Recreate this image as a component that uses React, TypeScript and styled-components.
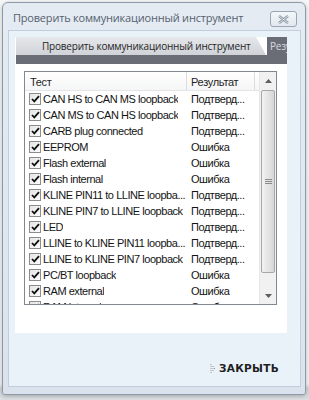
import React from "react";
import styled, { createGlobalStyle } from "styled-components";

const Global = createGlobalStyle`
  html, body { margin: 0; padding: 0; }
  body { width: 309px; height: 400px; overflow: hidden; background: #dfe2e5; }
`;

const Page = styled.div`
  width: 309px;
  height: 400px;
  box-sizing: border-box;
  padding: 2px 0 0 2px;
  background: linear-gradient(#f6f7f8 0%, #f2f3f4 96%, #d3d6da 97%, #dcdfe2 100%);
  display: flex;
  flex-direction: column;
  align-items: flex-start;
`;

const Window = styled.div`
  width: 304px;
  height: 393px;
  box-sizing: border-box;
  border: 1px solid #8e9aa8;
  border-radius: 6px 6px 3px 3px;
  background: linear-gradient(#e4ebf3, #dae3ed);
  display: flex;
  flex-direction: column;
  box-shadow: 0 1px 4px rgba(0, 0, 0, 0.25);
`;

const TitleBar = styled.div`
  height: 27px;
  display: flex;
  align-items: flex-start;
  justify-content: space-between;
  padding: 0 8px 0 10px;
`;

const Title = styled.div`
  font-family: "Open Sans", "Noto Sans", sans-serif;
  font-size: 11px;
  letter-spacing: -0.2px;
  line-height: 14px;
  margin-top: 8px;
  color: #56616e;
  white-space: nowrap;
`;

const CloseButton = styled.div`
  width: 27px;
  height: 16px;
  margin-top: 8px;
  box-sizing: border-box;
  border: 1px solid #9aa6b3;
  border-radius: 3px;
  background: linear-gradient(#f4f7fa, #e2e8ef);
  display: flex;
  align-items: center;
  justify-content: center;
`;

const Client = styled.div`
  flex: 1;
  margin: 0 4px 7px 5px;
  box-sizing: border-box;
  border: 1px solid #c2cedb;
  background: #e9f1f9;
  padding: 6px 0 0 6px;
  display: flex;
  flex-direction: column;
`;

const Panel = styled.div`
  width: 272px;
  height: 296px;
  background: #ffffff;
  display: flex;
  flex-direction: column;
`;

const TabStrip = styled.div`
  height: 18px;
  display: flex;
  gap: 1px;
  padding-left: 1px;
`;

const Tab = styled.div<{ $active?: boolean }>`
  font-family: "Open Sans", "Noto Sans", sans-serif;
  font-size: 10px;
  letter-spacing: -0.2px;
  line-height: 18px;
  white-space: nowrap;
  overflow: hidden;
  ${(p) =>
    p.$active
      ? `
    width: 250px;
    flex: none;
    padding-left: 26px;
    box-sizing: border-box;
    color: #262626;
    background: linear-gradient(#e6e8eb, #cfd2d7);
    clip-path: polygon(0 0, 240px 0, 250px 100%, 0 100%);
  `
      : `
    flex: 1;
    padding-left: 3px;
    color: #d8d9e0;
    background: #6b6d76;
  `}
`;

const DarkBar = styled.div`
  height: 9px;
  background: #6b6d76;
  margin-left: 1px;
`;

const ListArea = styled.div`
  padding: 7px 0 0 9px;
`;

const ListBox = styled.div`
  width: 253px;
  height: 234px;
  box-sizing: border-box;
  border: 1px solid #828790;
  display: flex;
  overflow: hidden;
`;

const Columns = styled.div`
  flex: 1;
  display: flex;
  flex-direction: column;
  overflow: hidden;
`;

const HeaderRow = styled.div`
  height: 18px;
  flex: none;
  display: grid;
  grid-template-columns: 162px 68px 1fr;
  border-bottom: 1px solid #e5e5e5;
  background: linear-gradient(#ffffff, #f5f6f7);
`;

const HeaderCell = styled.div<{ $pad: number }>`
  font-family: "Liberation Sans", Arial, sans-serif;
  font-size: 11px;
  letter-spacing: -0.3px;
  line-height: 15px;
  padding-top: 3px;
  color: #1e1e1e;
  padding-left: ${(p) => p.$pad}px;
  border-right: 1px solid #dcdcdc;
  white-space: nowrap;
  overflow: hidden;
`;

const Row = styled.div`
  height: 16px;
  flex: none;
  display: grid;
  grid-template-columns: 162px 68px;
  align-items: center;
`;

const NameCell = styled.div`
  display: flex;
  align-items: center;
  gap: 2px;
  padding-left: 4px;
  overflow: hidden;
`;

const CellText = styled.span<{ $pad?: number }>`
  font-family: "Liberation Sans", Arial, sans-serif;
  font-size: 11px;
  letter-spacing: -0.45px;
  color: #141414;
  white-space: nowrap;
  overflow: hidden;
  padding-left: ${(p) => p.$pad ?? 0}px;
`;

const Check = styled.div`
  width: 12px;
  height: 12px;
  flex: none;
  box-sizing: border-box;
  border: 1px solid #8d8d8d;
  background: linear-gradient(135deg, #e4e4e4, #fdfdfd);
  display: flex;
  align-items: center;
  justify-content: center;
`;

const ScrollBar = styled.div`
  width: 16px;
  flex: none;
  background: #f1f1f1;
  border-left: 1px solid #e8e8e8;
  display: flex;
  flex-direction: column;
  align-items: center;
`;

const ScrollButton = styled.div`
  width: 15px;
  height: 17px;
  flex: none;
  display: flex;
  align-items: center;
  justify-content: center;
`;

const Thumb = styled.div`
  width: 14px;
  height: 183px;
  box-sizing: border-box;
  margin-top: 1px;
  border: 1px solid #a7a7a7;
  border-radius: 2px;
  background: linear-gradient(90deg, #f2f2f2, #e2e2e2 60%, #d6d6d6);
  display: flex;
  align-items: center;
  justify-content: center;
`;

const Spacer = styled.div`
  flex: 1;
`;

const Footer = styled.div`
  display: flex;
  align-items: center;
  justify-content: flex-end;
  gap: 4px;
  margin-top: 28px;
  padding-right: 21px;
`;

const CloseText = styled.span`
  font-family: "DejaVu Sans", "Liberation Sans", sans-serif;
  font-weight: bold;
  font-size: 10.5px;
  letter-spacing: 0.3px;
  line-height: 14px;
  color: #1f1f1f;
`;

const rows: [string, string][] = [
  ["CAN HS to CAN MS loopback", "Подтверд..."],
  ["CAN MS to CAN HS loopback", "Подтверд..."],
  ["CARB plug connected", "Подтверд..."],
  ["EEPROM", "Ошибка"],
  ["Flash external", "Ошибка"],
  ["Flash internal", "Ошибка"],
  ["KLINE PIN11 to LLINE loopba...", "Подтверд..."],
  ["KLINE PIN7 to LLINE loopback", "Подтверд..."],
  ["LED", "Подтверд..."],
  ["LLINE to KLINE PIN11 loopba...", "Подтверд..."],
  ["LLINE to KLINE PIN7 loopback", "Подтверд..."],
  ["PC/BT loopback", "Ошибка"],
  ["RAM external", "Ошибка"],
  ["RAM internal", "Ошибка"],
];

const CheckMark = () => (
  <svg width="9" height="8" viewBox="0 0 9 8">
    <path d="M1 4 L3.3 6.4 L8 1.2" fill="none" stroke="#111" strokeWidth="1.8" />
  </svg>
);

export default function App() {
  return (
    <>
      <Global />
      <Page>
        <Window>
          <TitleBar>
            <Title>Проверить коммуникационный инструмент</Title>
            <CloseButton>
              <svg width="11" height="9" viewBox="0 0 11 9">
                <path d="M1 1 L10 8 M10 1 L1 8" stroke="#8b95a1" strokeWidth="2.4" />
                <path d="M1 1 L10 8 M10 1 L1 8" stroke="#eef2f6" strokeWidth="0.8" />
              </svg>
            </CloseButton>
          </TitleBar>
          <Client>
            <Panel>
              <TabStrip>
                <Tab $active>Проверить коммуникационный инструмент</Tab>
                <Tab>Результаты</Tab>
              </TabStrip>
              <DarkBar />
              <ListArea>
                <ListBox>
                  <Columns>
                    <HeaderRow>
                      <HeaderCell $pad={5}>Тест</HeaderCell>
                      <HeaderCell $pad={4}>Результат</HeaderCell>
                      <div />
                    </HeaderRow>
                    {rows.map(([name, res]) => (
                      <Row key={name}>
                        <NameCell>
                          <Check>
                            <CheckMark />
                          </Check>
                          <CellText>{name}</CellText>
                        </NameCell>
                        <CellText $pad={4}>{res}</CellText>
                      </Row>
                    ))}
                  </Columns>
                  <ScrollBar>
                    <ScrollButton>
                      <svg width="7" height="4" viewBox="0 0 7 4">
                        <path d="M0 4 L3.5 0 L7 4 Z" fill="#5d5d5d" />
                      </svg>
                    </ScrollButton>
                    <Thumb>
                      <svg width="7" height="6" viewBox="0 0 7 6">
                        <path d="M0 0.5 H7 M0 2.5 H7 M0 4.5 H7" stroke="#8a8a8a" strokeWidth="1" />
                      </svg>
                    </Thumb>
                    <Spacer />
                    <ScrollButton>
                      <svg width="7" height="4" viewBox="0 0 7 4">
                        <path d="M0 0 L3.5 4 L7 0 Z" fill="#5d5d5d" />
                      </svg>
                    </ScrollButton>
                  </ScrollBar>
                </ListBox>
              </ListArea>
            </Panel>
            <Footer>
              <svg width="5" height="9" viewBox="0 0 5 9">
                <path d="M0.5 0.5 h1 M0.5 2.5 h1 M2.5 2.5 h1 M0.5 4.5 h1 M2.5 4.5 h1 M4 4.5 h1 M0.5 6.5 h1 M2.5 6.5 h1 M0.5 8.5 h1" stroke="#9a9a9a" strokeWidth="1" />
              </svg>
              <CloseText>ЗАКРЫТЬ</CloseText>
            </Footer>
          </Client>
        </Window>
      </Page>
    </>
  );
}
